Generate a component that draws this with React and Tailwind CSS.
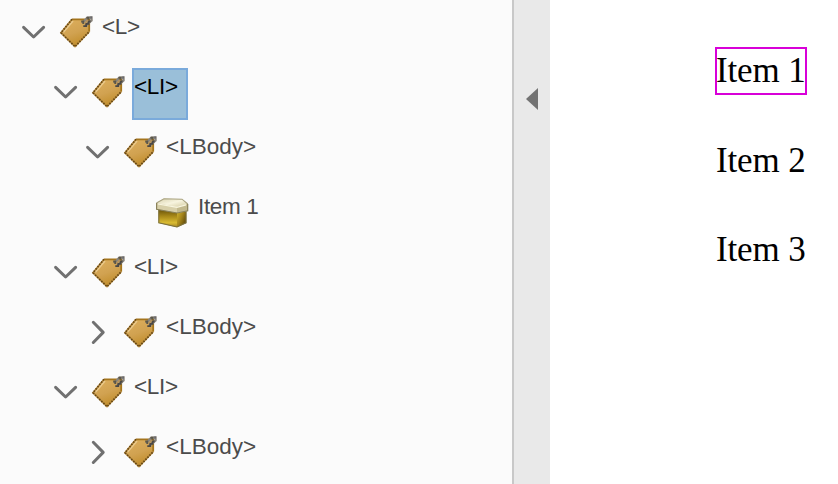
import React from "react";

const rows = [
  { label: "<L>", indent: "pl-5", state: "open", tracking: "tracking-[-0.3px]" },
  { label: "<LI>", indent: "pl-[52px]", state: "open", selected: true, tracking: "tracking-[-0.3px]" },
  { label: "<LBody>", indent: "pl-[84px]", state: "open", tracking: "tracking-normal" },
  { label: "Item 1", indent: "pl-[116px]", state: "leaf", tracking: "tracking-[-0.35px]" },
  { label: "<LI>", indent: "pl-[52px]", state: "open", tracking: "tracking-[-0.3px]" },
  { label: "<LBody>", indent: "pl-[84px]", state: "closed", tracking: "tracking-normal" },
  { label: "<LI>", indent: "pl-[52px]", state: "open", tracking: "tracking-[-0.3px]" },
  { label: "<LBody>", indent: "pl-[84px]", state: "closed", tracking: "tracking-normal" },
];

function Chevron({ state }) {
  return (
    <svg className="mt-4 h-7 w-7 shrink-0" viewBox="0 0 28 28" fill="none" stroke="#707070" strokeWidth="3" strokeLinecap="round" strokeLinejoin="round">
      {state === "open" && <path d="M3.6 9.4 L13.6 19 L23.6 9.4" />}
      {state === "closed" && <path d="M9.3 4.3 L19.2 14.4 L9.3 24.5" />}
    </svg>
  );
}

function TagIcon() {
  return (
    <svg className="h-9 w-9" viewBox="0 0 36 36">
      <defs>
        <linearGradient id="tagFill" x1="0.25" y1="0" x2="0.65" y2="1">
          <stop offset="0" stopColor="#dcae5c" />
          <stop offset="0.5" stopColor="#d1a251" />
          <stop offset="1" stopColor="#bf8a25" />
        </linearGradient>
      </defs>
      <path d="M13 6.3 H30.2 V18.7 L16 33.6 L2 19.8 Z" fill="url(#tagFill)" />
      <path d="M14 8 L4.4 19.3" stroke="#e9c98b" strokeWidth="1.5" fill="none" />
      <path d="M13 6.3 H30.2 V18.7" fill="none" stroke="#a4741c" strokeWidth="1.8" />
      <path d="M13 6.3 L2 19.8 L16 33.6 L30.2 18.7" fill="none" stroke="#b78c43" strokeWidth="1.7" />
      <path d="M13 6.3 L2 19.8 L16 33.6 L30.2 18.7" fill="none" stroke="#674711" strokeWidth="1.7" strokeDasharray="1.6 1.3" />
      <path d="M23.3 10.3 L28.5 4.5 H32.5 V7.5 L26 13" fill="none" stroke="#8a857c" strokeWidth="2.4" />
      <path d="M22.2 8.5 H24.3 V11 M27.5 4.8 H29.5 V6.8" fill="none" stroke="#5c5749" strokeWidth="1.8" />
      <path d="M24.3 13.2 H27.2 V10.8 H29.5 V8.5 H31.5" fill="none" stroke="#4b4844" strokeWidth="1.8" />
      <path d="M25.8 10 L29 7.2" stroke="#b09060" strokeWidth="1.6" />
      <path d="M31.3 4.5 H33" stroke="#68686e" strokeWidth="1.8" />
    </svg>
  );
}

function BoxIcon() {
  return (
    <svg className="h-9 w-9" viewBox="0 0 36 36">
      <defs>
        <linearGradient id="boxFront" x1="0" y1="0" x2="0" y2="1">
          <stop offset="0" stopColor="#654f08" />
          <stop offset="0.4" stopColor="#a88919" />
          <stop offset="0.75" stopColor="#d9bb32" />
          <stop offset="1" stopColor="#a18327" />
        </linearGradient>
        <linearGradient id="boxSide" x1="0" y1="0" x2="1" y2="0.7">
          <stop offset="0" stopColor="#d1b52f" />
          <stop offset="0.5" stopColor="#a5851b" />
          <stop offset="1" stopColor="#5b4608" />
        </linearGradient>
        <linearGradient id="boxLid" x1="0" y1="0" x2="1" y2="1">
          <stop offset="0" stopColor="#d9d2ad" />
          <stop offset="0.5" stopColor="#f7f4df" />
          <stop offset="1" stopColor="#d3ca9f" />
        </linearGradient>
      </defs>
      <path d="M3.5 16 L22 19 V34.3 L3.5 30 Z" fill="url(#boxFront)" />
      <path d="M22 19 L31.3 17 V30 L22 34.3 Z" fill="url(#boxSide)" />
      <path d="M3.8 17 V29.8 L22 34 L31 29.8 V18" fill="none" stroke="#7c713d" strokeWidth="1.1" />
      <path d="M1.3 9.7 L8.7 5.7 L27 6 L33 11 V18 L22 20 L1.3 16.3 Z" fill="#d8d0aa" />
      <path d="M1.5 10 L9 5.8 L27 6.2 L32.5 11 L22 14 Z" fill="url(#boxLid)" />
      <path d="M22 14 L33 11.2 V17.8 L22 20 Z" fill="#c2b98e" />
      <path d="M1.5 10 L9 5.8 L27 6.2 L32.8 11" fill="none" stroke="#aaa483" strokeWidth="1.1" />
      <path d="M1.6 10 V16.3 L22 20 L32.7 17.8 V11" fill="none" stroke="#8a825b" strokeWidth="1.2" />
      <path d="M3 11 L22 14.3 L31 11.8" fill="none" stroke="#f8f5df" strokeWidth="1.2" />
    </svg>
  );
}

function TreeRow({ row }) {
  return (
    <li className={`flex h-[60px] shrink-0 items-start ${row.indent}`}>
      <Chevron state={row.state} />
      <span className="ml-[11px] mt-[11px] shrink-0">{row.state === "leaf" ? <BoxIcon /> : <TagIcon />}</span>
      <span
        className={`ml-[5px] mt-1.5 h-[52px] whitespace-nowrap border-2 pr-2 pt-1 text-[22.5px] leading-[26px] ${row.tracking} ${
          row.selected ? "border-[#7aaadb] bg-[#9abfd9] text-black" : "border-transparent text-[#4b4b4b]"
        }`}
      >
        {row.label}
      </span>
    </li>
  );
}

export default function App() {
  return (
    <div className="flex h-[484px] w-[838px] overflow-hidden bg-white">
      <ul className="flex w-[512px] shrink-0 flex-col overflow-hidden bg-[#fbfbfb] pt-0.5 font-['Liberation_Sans',Arial,sans-serif]">
        {rows.map((row, i) => (
          <TreeRow key={i} row={row} />
        ))}
      </ul>
      <div className="w-[38px] shrink-0 border-l-2 border-[#c8c8c8] bg-[#e9e9e9] pl-3 pt-[88px]">
        <svg className="h-[22px] w-3" viewBox="0 0 12 22">
          <path d="M0 11 L12 0 V22 Z" fill="#737373" />
        </svg>
      </div>
      <main className="flex flex-col items-start pl-[165px] pt-[47px] font-['Liberation_Serif','Times_New_Roman',serif] text-[35px] leading-[44px] tracking-[-0.15px] text-black">
        <div className="h-12 w-[92px] whitespace-nowrap border-2 border-[#d800d8]">
          <span className="-ml-px">Item 1</span>
        </div>
        <div className="ml-px mt-11 whitespace-nowrap">Item 2</div>
        <div className="ml-px mt-[45px] whitespace-nowrap">Item 3</div>
      </main>
    </div>
  );
}
